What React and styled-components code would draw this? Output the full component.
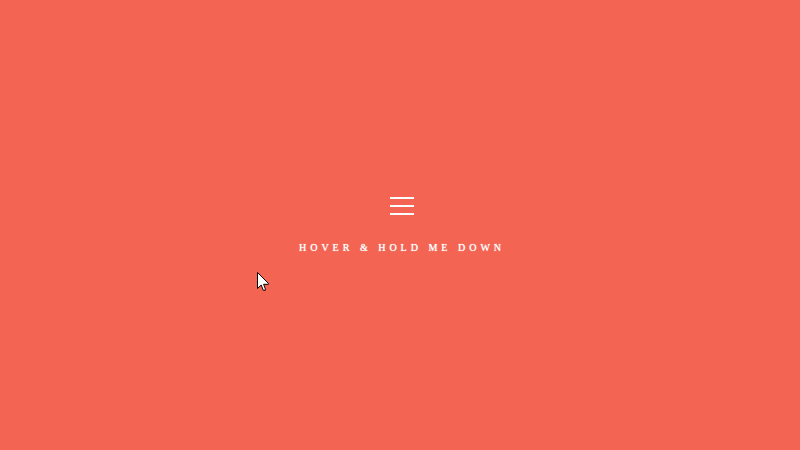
import React from "react";
import styled, { createGlobalStyle } from "styled-components";

const GlobalStyle = createGlobalStyle`
  body {
    margin: 0;
    background: #f36452;
  }
`;

const Stage = styled.main`
  position: relative;
  box-sizing: border-box;
  min-height: 100vh;
  padding: 3px 0 0 4px;
  display: grid;
  place-items: center;
  overflow: hidden;
`;

const MenuButton = styled.button`
  display: flex;
  flex-direction: column;
  align-items: center;
  gap: 25px;
  padding: 0;
  border: 0;
  background: none;
  color: #fff;
  cursor: pointer;
`;

const Bars = styled.span`
  display: flex;
  flex-direction: column;
  gap: 6px;
  width: 24px;
`;

const Bar = styled.span`
  height: 2px;
  background: #fff;
`;

const Label = styled.span`
  font: 10px/16px "Liberation Serif", serif;
  letter-spacing: 4px;
  text-transform: uppercase;
  white-space: nowrap;
  text-shadow: 0 0 1px #fff;
`;

const Pointer = styled.svg`
  position: absolute;
  left: 257px;
  top: 272px;
  width: 12px;
  height: 19px;
  pointer-events: none;
`;

export default function App() {
  return (
    <>
      <GlobalStyle />
      <Stage>
        <MenuButton type="button">
          <Bars>
            <Bar />
            <Bar />
            <Bar />
          </Bars>
          <Label>Hover &amp; hold me down</Label>
        </MenuButton>
        <Pointer viewBox="0 0 12 19" aria-hidden="true">
          <path
            d="M.5 .5V16.5L4.2 13L6.3 18.3H8.3V16.8L6.6 12.3H11.4V11.4Z"
            fill="#fff"
            stroke="#000"
            strokeLinejoin="round"
          />
        </Pointer>
      </Stage>
    </>
  );
}
